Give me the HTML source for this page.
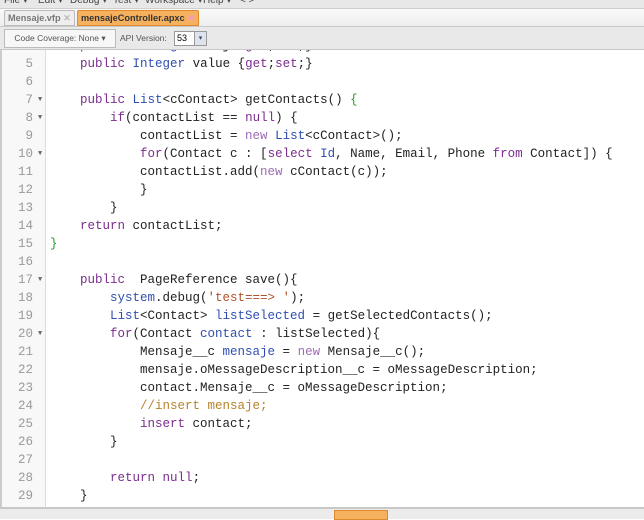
<!DOCTYPE html>
<html><head><style>
body{margin:0;width:644px;height:517px;overflow:hidden;background:#fff;font-family:"Liberation Sans",sans-serif;position:relative}
.menu{position:absolute;top:0;left:0;width:644px;height:8px;background:#e8e8e8;border-bottom:1px solid #cfcfcf;overflow:hidden}
.menu span{position:absolute;top:-5px;font-size:10px;color:#444}
.tabs{position:absolute;top:9px;left:0;width:644px;height:17px;background:linear-gradient(#fafafa,#eeeeee);border-bottom:1px solid #c8c8c8}
.tab{position:absolute;top:1px;height:14px;font-size:9.2px;font-weight:bold;line-height:14px;padding:0 3px;border:1px solid #bbb;border-radius:2px 2px 0 0}
.tb{position:absolute;top:27px;left:0;width:644px;height:22px;background:#e9e9e9;border-bottom:1px solid #c8c8c8}
.gut{position:absolute;top:50px;left:0;width:46px;height:457px;background:#f8f8f8;border-right:1px solid #ddd;border-left:2px solid #ccc;box-sizing:border-box}
.code{position:absolute;left:0;top:36px;font-family:"Liberation Mono",monospace;font-size:12.5px;line-height:18px;color:#222}
.l{height:18px;white-space:pre;position:relative}
.n{position:absolute;left:0;width:33px;text-align:right;color:#999}
.a{position:absolute;left:38px;font-size:7px;color:#666}
.t{position:absolute;left:50px}
.k{color:#7b2d8e}.y{color:#2f4fb0}.s{color:#b0522a}.c{color:#b5832c}.w{color:#9d6cb5}.g{color:#2a9a2a}
.bot{position:absolute;top:507px;left:0;width:644px;height:10px;background:#ececec;border-top:2px solid #c8c8c8}
</style></head><body>
<div class="menu"><span style="left:4px">File ▾</span><span style="left:38px">Edit ▾</span><span style="left:70px">Debug ▾</span><span style="left:113px">Test ▾</span><span style="left:145px">Workspace ▾</span><span style="left:203px">Help ▾</span><span style="left:240px">&lt; &gt;</span></div>
<div class="tabs">
<div class="tab" style="left:4px;color:#777;background:#eee">Mensaje.vfp <span style="color:#bbb">✕</span></div>
<div class="tab" style="left:77px;color:#333;background:#f6b15f;border-color:#e08a30">mensajeController.apxc <span style="color:#e9d">✕</span></div>
</div>
<div class="tb">
<div style="position:absolute;left:4px;top:2px;width:110px;height:17px;border:1px solid #bbb;background:#f7f7f7;font-size:8.5px;line-height:17px;color:#555;text-align:center">Code Coverage: None ▾</div>
<div style="position:absolute;left:120px;top:2px;font-size:8.5px;line-height:19px;color:#555">API Version:</div>
<div style="position:absolute;left:174px;top:4px;width:18px;height:13px;border:1px solid #999;background:#fff;font-size:9px;line-height:13px;padding-left:2px">53</div>
<div style="position:absolute;left:194px;top:4px;width:11px;height:13px;border:1px solid #999;background:#dde4ee;font-size:7px;line-height:13px;text-align:center;color:#446">▾</div>
</div>
<div class="gut"></div>
<div style="position:absolute;top:50px;left:47px;width:597px;height:457px;overflow:hidden">
<div class="code" style="left:-47px;top:-13px">
<div class="l"><span class="t">    <span class="k">public</span> <span class="y">String</span> mensaje <span class="k">get</span>;<span class="k">set</span>;}</span></div>
<div class="l"><span class="t">    <span class="k">public</span> <span class="y">Integer</span> value {<span class="k">get</span>;<span class="k">set</span>;}</span></div>
<div class="l"></div>
<div class="l"><span class="t">    <span class="k">public</span> <span class="y">List</span>&lt;cContact&gt; getContacts() <span class="g">{</span></span></div>
<div class="l"><span class="t">        <span class="k">if</span>(contactList == <span class="k">null</span>) {</span></div>
<div class="l"><span class="t">            contactList = <span class="w">new</span> <span class="y">List</span>&lt;cContact&gt;();</span></div>
<div class="l"><span class="t">            <span class="k">for</span>(Contact c : [<span class="k">select</span> <span class="y">Id</span>, Name, Email, Phone <span class="k">from</span> Contact]) {</span></div>
<div class="l"><span class="t">            contactList.add(<span class="w">new</span> cContact(c));</span></div>
<div class="l"><span class="t">            }</span></div>
<div class="l"><span class="t">        }</span></div>
<div class="l"><span class="t">    <span class="k">return</span> contactList;</span></div>
<div class="l"><span class="t"><span class="g">}</span></span></div>
<div class="l"></div>
<div class="l"><span class="t">    <span class="k">public</span>  PageReference save(){</span></div>
<div class="l"><span class="t">        <span class="y">system</span>.debug(<span class="s">'test===&gt; '</span>);</span></div>
<div class="l"><span class="t">        <span class="y">List</span>&lt;Contact&gt; <span class="y">listSelected</span> = getSelectedContacts();</span></div>
<div class="l"><span class="t">        <span class="k">for</span>(Contact <span class="y">contact</span> : listSelected){</span></div>
<div class="l"><span class="t">            Mensaje__c <span class="y">mensaje</span> = <span class="w">new</span> Mensaje__c();</span></div>
<div class="l"><span class="t">            mensaje.oMessageDescription__c = oMessageDescription;</span></div>
<div class="l"><span class="t">            contact.Mensaje__c = oMessageDescription;</span></div>
<div class="l"><span class="t">            <span class="c">//insert mensaje;</span></span></div>
<div class="l"><span class="t">            <span class="k">insert</span> contact;</span></div>
<div class="l"><span class="t">        }</span></div>
<div class="l"></div>
<div class="l"><span class="t">        <span class="k">return</span> <span class="k">null</span>;</span></div>
<div class="l"><span class="t">    }</span></div>
</div></div>
<div style="position:absolute;top:50px;left:0;width:47px;height:457px;overflow:hidden">
<div class="code" style="left:0;top:-13px;font-size:12.5px">
<div class="l"></div>
<div class="l"><span class="n">5</span></div><div class="l"><span class="n">6</span></div>
<div class="l"><span class="n">7</span><span class="a">▼</span></div><div class="l"><span class="n">8</span><span class="a">▼</span></div>
<div class="l"><span class="n">9</span></div><div class="l"><span class="n">10</span><span class="a">▼</span></div>
<div class="l"><span class="n">11</span></div><div class="l"><span class="n">12</span></div><div class="l"><span class="n">13</span></div>
<div class="l"><span class="n">14</span></div><div class="l"><span class="n">15</span></div><div class="l"><span class="n">16</span></div>
<div class="l"><span class="n">17</span><span class="a">▼</span></div><div class="l"><span class="n">18</span></div><div class="l"><span class="n">19</span></div>
<div class="l"><span class="n">20</span><span class="a">▼</span></div><div class="l"><span class="n">21</span></div><div class="l"><span class="n">22</span></div>
<div class="l"><span class="n">23</span></div><div class="l"><span class="n">24</span></div><div class="l"><span class="n">25</span></div>
<div class="l"><span class="n">26</span></div><div class="l"><span class="n">27</span></div><div class="l"><span class="n">28</span></div>
<div class="l"><span class="n">29</span></div>
</div></div>
<div class="bot"><div style="position:absolute;left:334px;top:1px;width:52px;height:8px;background:#f6b15f;border:1px solid #e08a30"></div></div>
</body></html>
